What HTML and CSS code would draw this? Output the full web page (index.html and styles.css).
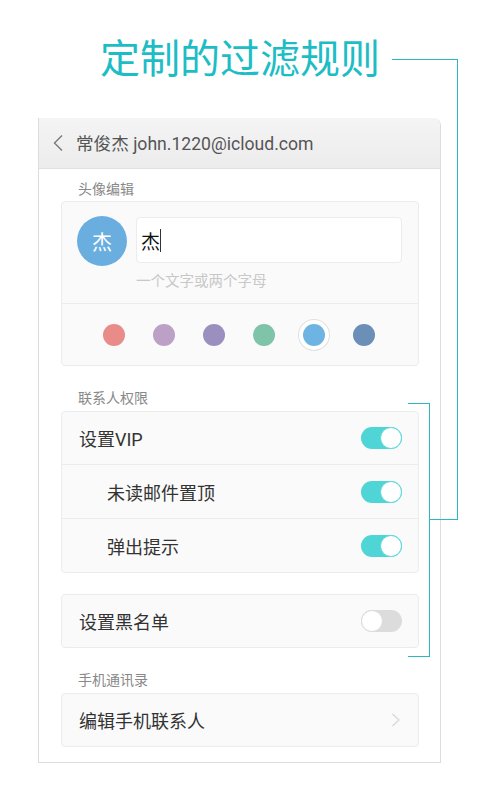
FILE: index.html
```html
<!DOCTYPE html>
<html lang="zh-CN">
<head>
<meta charset="utf-8">
<title>定制的过滤规则</title>
<link rel="stylesheet" href="styles.css">
</head>
<body>
<div class="page">
  <h1 class="title">定制的过滤规则</h1>

  <div class="frame">
    <div class="header">
      <svg class="back" width="12" height="18" viewBox="0 0 12 18"><path d="M10 1.5 L2.5 9 L10 16.5" fill="none" stroke="#7a7a7a" stroke-width="1.4"/></svg>
      <span class="header-text">常俊杰 john.1220@icloud.com</span>
    </div>

    <div class="content">
      <div class="label first">头像编辑</div>
      <div class="card">
        <div class="avatar-edit">
          <div class="avatar">杰</div>
          <div class="name-col">
            <div class="name-input"><span class="name-char">杰</span><span class="caret"></span></div>
            <div class="hint">一个文字或两个字母</div>
          </div>
        </div>
        <div class="swatches">
          <div class="swatch"><span class="dot c1"></span></div>
          <div class="swatch"><span class="dot c2"></span></div>
          <div class="swatch"><span class="dot c3"></span></div>
          <div class="swatch"><span class="dot c4"></span></div>
          <div class="swatch"><span class="dot c5 selected"></span></div>
          <div class="swatch"><span class="dot c6"></span></div>
        </div>
      </div>

      <div class="label">联系人权限</div>
      <div class="card">
        <div class="row"><span class="row-text">设置VIP</span><span class="toggle on"><span class="knob"></span></span></div>
        <div class="row sub"><span class="row-text">未读邮件置顶</span><span class="toggle on"><span class="knob"></span></span></div>
        <div class="row sub"><span class="row-text">弹出提示</span><span class="toggle on"><span class="knob"></span></span></div>
      </div>

      <div class="card spaced">
        <div class="row"><span class="row-text">设置黑名单</span><span class="toggle off"><span class="knob"></span></span></div>
      </div>

      <div class="label">手机通讯录</div>
      <div class="card">
        <div class="row"><span class="row-text">编辑手机联系人</span>
          <svg class="chev" width="10" height="14" viewBox="0 0 10 14"><path d="M1.5 1 L8 7 L1.5 13" fill="none" stroke="#d6d6d6" stroke-width="1.2"/></svg>
        </div>
      </div>
    </div>
  </div>

  <div class="bracket b1"></div>
  <div class="bracket b1-foot"></div>
  <div class="bracket b2"></div>
</div>
</body>
</html>
```

FILE: styles.css
```css
* { box-sizing: border-box; }
html, body { margin: 0; padding: 0; background: #fff; }
body {
  font-family: Roboto, "Noto Sans CJK SC", sans-serif;
  width: 480px;
  height: 800px;
  overflow: hidden;
}
.page {
  position: relative;
  padding-top: 36px;
  height: 800px;
}
.title {
  margin: 0;
  font-family: "Noto Sans CJK SC", sans-serif;
  font-weight: 400;
  font-size: 40px;
  line-height: 40px;
  height: 40px;
  text-align: center;
  color: #1dbdc5;
}
.frame {
  margin: 42px 0 0 38px;
  width: 403px;
  border: 1px solid #dcdcdc;
  border-top: none;
  border-radius: 0 8px 0 0;
  background: #fff;
}
.header {
  height: 51px;
  display: flex;
  align-items: center;
  background: linear-gradient(#f4f4f4, #ececec);
  border-bottom: 1px solid #e0e0e0;
  border-radius: 0 8px 0 0;
  padding-left: 13px;
}
.back { flex: none; }
.header-text {
  margin-left: 12px;
  font-size: 17.6px;
  color: #555;
  padding-bottom: 1px;
}
.content {
  padding: 0 21px 15px 22px;
}
.label {
  padding: 9px 0 3px 17px;
  font-size: 14px;
  line-height: 20px;
  color: #888;
  margin-top: 13px;
}
.label.first { margin-top: 0; padding-top: 10px; padding-bottom: 2px; }
.card {
  background: #fafafa;
  border: 1px solid #ececec;
  border-radius: 4px;
}
.card.spaced { margin-top: 21px; }
.avatar-edit {
  display: flex;
  padding: 15px 16px 12px 15px;
  border-bottom: 1px solid #ececec;
}
.avatar {
  flex: none;
  width: 50px;
  height: 50px;
  margin-top: -1px;
  border-radius: 50%;
  background: #6aaee0;
  color: #fff;
  font-size: 20px;
  display: flex;
  align-items: center;
  justify-content: center;
}
.name-col {
  flex: 1;
  margin-left: 9px;
}
.name-input {
  height: 46px;
  background: #fff;
  border: 1px solid #ececec;
  border-radius: 4px;
  display: flex;
  align-items: center;
  padding-left: 4px;
}
.name-char {
  font-size: 19px;
  color: #111;
}
.caret {
  width: 1px;
  height: 23px;
  background: #333;
}
.hint {
  margin-top: 10px;
  font-size: 14.5px;
  line-height: 18px;
  color: #c8c8c8;
}
.swatches {
  height: 61px;
  display: flex;
  justify-content: center;
  align-items: center;
  padding-right: 2px;
}
.swatch {
  width: 50px;
  display: flex;
  justify-content: center;
}
.dot {
  width: 22px;
  height: 22px;
  border-radius: 50%;
}
.dot.selected { box-shadow: 0 0 0 4px #fff, 0 0 0 5px #e0e0e0; }
.c1 { background: #e88b89; }
.c2 { background: #bca0c6; }
.c3 { background: #9b8fc0; }
.c4 { background: #7fc3a8; }
.c5 { background: #6db4e2; }
.c6 { background: #6b8fb6; }
.row {
  height: 52px;
  display: flex;
  align-items: center;
  justify-content: space-between;
  padding: 0 16px 0 17px;
}
.row + .row { border-top: 1px solid #ececec; height: 54px; }
.row.sub { padding-left: 45px; }
.row-text {
  font-size: 18px;
  color: #333;
}
.toggle {
  width: 41px;
  height: 22px;
  border-radius: 11px;
  display: flex;
  align-items: center;
}
.toggle.on { background: #4fd5d6; justify-content: flex-end; }
.toggle.off { background: #dcdcdc; justify-content: flex-start; }
.knob {
  width: 22px;
  height: 22px;
  border-radius: 50%;
  background: #fff;
}
.toggle.on .knob { border: 1.5px solid #5edadb; }
.toggle.off .knob { border: 1.5px solid #dcdcdc; }
.chev { margin-right: 1px; }
.bracket {
  position: absolute;
  border-color: #2cb7c3;
  border-style: solid;
  border-width: 0;
}
.b1 {
  left: 392px;
  top: 59px;
  width: 66px;
  height: 461px;
  border-top-width: 1px;
  border-right-width: 1px;
}
.b1-foot {
  left: 429px;
  top: 519px;
  width: 29px;
  height: 0;
  border-top-width: 1px;
}
.b2 {
  left: 408px;
  top: 403px;
  width: 22px;
  height: 254px;
  border-top-width: 1px;
  border-right-width: 1px;
  border-bottom-width: 1px;
}
```
